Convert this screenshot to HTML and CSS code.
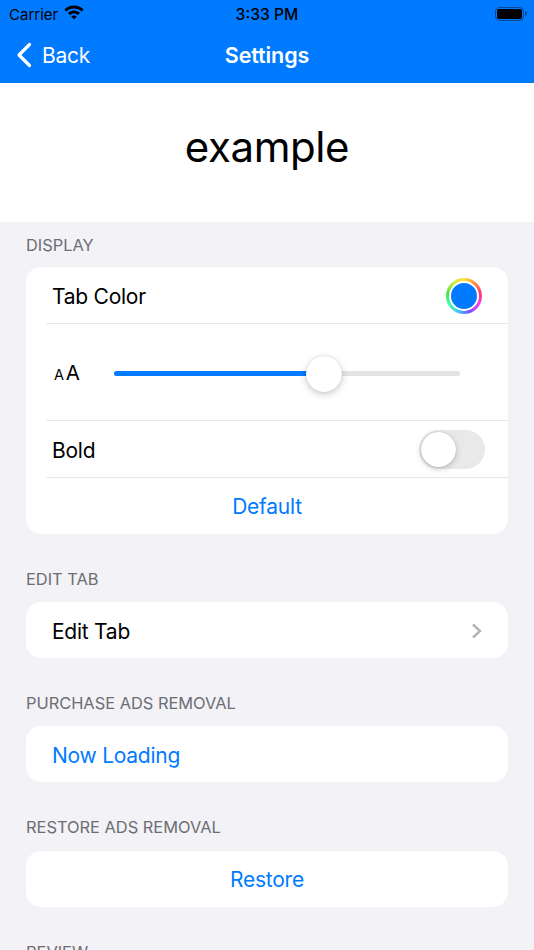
FILE: index.html
```html
<!DOCTYPE html>
<html lang="en">
<head>
  <meta charset="UTF-8" />
  <title>Settings</title>
  <link rel="stylesheet" href="styles.css">
</head>
<body>

  <div class="topbar">
    <div class="status">
      <div class="status-left">
        <span>Carrier</span>
        <svg class="wifi" viewBox="0 0 20 15" width="20" height="15">
          <path d="M10 .6C6.300.6 2.900 2 .4 4.400l2 2.100C4.400 4.600 7.100 3.500 10 3.500s5.600 1.100 7.600 3l2-2.100C17.100 2 13.700.6 10 .6z"/>
          <path d="M10 5.600c-2.300 0-4.400.9-6 2.400l2 2.100C7.100 9.100 8.500 8.500 10 8.500s2.900.6 4 1.600l2-2.100c-1.600-1.500-3.700-2.400-6-2.400z"/>
          <path d="M10 10.500c-1.100 0-2 .4-2.700 1.100L10 14.400l2.700-2.800c-.7-.7-1.600-1.100-2.700-1.100z"/>
        </svg>
      </div>
      <span class="clock">3:33 PM</span>
      <div class="battery"><div class="battery-fill"></div></div>
    </div>
    <div class="nav">
      <div class="back">
        <svg viewBox="0 0 16 26" width="16" height="26">
          <path d="M13.500 2.500L3 13l10.500 10.500" fill="none" stroke="#fff" stroke-width="3.200" stroke-linecap="round" stroke-linejoin="round"/>
        </svg>
        <span class="back-text">Back</span>
      </div>
      <div class="nav-title">Settings</div>
    </div>
  </div>

  <div class="preview">example</div>

  <div class="content">
    <div class="group-label first">DISPLAY</div>
    <div class="card">
      <div class="row">
        <span>Tab Color</span>
        <div class="color-well"><div class="color-dot"></div></div>
      </div>
      <div class="row slider-row">
        <div class="size-icon"><span class="small-a">A</span><span class="big-a">A</span></div>
        <div class="slider">
          <div class="slider-fill"></div>
          <div class="slider-knob"></div>
        </div>
      </div>
      <div class="row">
        <span>Bold</span>
        <div class="toggle"><div class="toggle-knob"></div></div>
      </div>
      <div class="row link center">Default</div>
    </div>

    <div class="group-label">EDIT TAB</div>
    <div class="card">
      <div class="row">
        <span>Edit Tab</span>
        <svg class="chevron" viewBox="0 0 12 16" width="12" height="16">
          <path d="M2 1.500l7 6.500-7 6.500" fill="none" stroke="#b4b4b8" stroke-width="2.400"/>
        </svg>
      </div>
    </div>

    <div class="group-label">PURCHASE ADS REMOVAL</div>
    <div class="card">
      <div class="row link">Now Loading</div>
    </div>

    <div class="group-label">RESTORE ADS REMOVAL</div>
    <div class="card">
      <div class="row link center">Restore</div>
    </div>

    <div class="group-label">REVIEW</div>
  </div>

</body>
</html>
```

FILE: styles.css
```css
html, body { margin: 0; height: 950px; overflow: hidden; }
body { font-family: Inter, "Liberation Sans", sans-serif; background: #f2f2f7; color: #000; }

.topbar { background: #007aff; height: 83px; }
.status { height: 28px; position: relative; display: flex; align-items: center; justify-content: space-between; padding: 0 8px 0 9px; font-size: 15px; }
.status-left { display: flex; align-items: center; gap: 6px; }
.wifi { display: block; margin-top: -3px; }
.clock { position: absolute; left: 0; right: 0; text-align: center; font-weight: 500; font-size: 15.700px; }
.battery { width: 29px; height: 14px; border: 1.500px solid rgba(0, 0, 0, 0.4); border-radius: 4.500px; padding: 1px; box-sizing: border-box; margin-right: 2px; position: relative; }
.battery::after { content: ""; position: absolute; right: -4px; top: 2.500px; width: 2px; height: 5px; background: rgba(0, 0, 0, 0.4); border-radius: 0 2px 2px 0; }
.battery-fill { height: 100%; background: #000; border-radius: 2px; }

.nav { height: 55px; position: relative; display: flex; align-items: center; justify-content: center; color: #fff; padding-bottom: 2px; box-sizing: border-box; }
.back { position: absolute; left: 16px; display: flex; align-items: center; gap: 10px; font-size: 21px; letter-spacing: -0.25px; }
.back svg { display: block; }
.back-text { margin-top: 2px; }
.nav-title { font-weight: 600; font-size: 21.500px; letter-spacing: -0.1px; }

.preview { background: #fff; height: 139px; display: flex; align-items: center; justify-content: center; font-size: 42px; letter-spacing: -0.4px; padding-bottom: 12px; box-sizing: border-box; }

.content { padding: 0 26px; }
.group-label { font-size: 16.400px; color: #6d6d72; height: 19px; line-height: 19px; margin: 36px 0 13.200px 0; }
.group-label.first { margin-top: 14px; margin-bottom: 12px; }

.card { background: #fff; border-radius: 15px; padding-left: 20px; }
.row { height: 54px; padding-top: 2px; display: flex; align-items: center; justify-content: space-between; padding-right: 24px; padding-left: 6px; font-size: 21px; letter-spacing: -0.25px; border-top: 1px solid #e5e5ea; }
.row:first-child { border-top: none; }
.link { color: #007aff; }
.center { justify-content: center; padding-left: 0; margin-left: -20px; padding-right: 0; border-top: none; position: relative; }
.row.center:not(:first-child) { height: 55px; }
.center::before { content: ""; position: absolute; top: 0; left: 20px; right: 0; height: 1px; background: #e5e5ea; }
.card > .center:first-child::before { display: none; }

.color-well { width: 36px; height: 36px; border-radius: 50%; box-sizing: border-box; padding: 3px; background: conic-gradient(#ffe23d, #ff8a3d, #ff3d6e, #f03dff, #7a4dff, #3dc8ff, #3dffb0, #4de03d, #c8ef3d, #ffe23d); display: flex; margin-right: 2px; margin-top: -1px; }
.color-dot { flex: 1; border-radius: 50%; background: #007aff; border: 2.500px solid #fff; }

.row.slider-row { height: 94px; padding-right: 48px; }
.size-icon { display: flex; align-items: baseline; gap: 2px; width: 60px; margin-left: 2px; flex: none; margin-top: -1px; }
.small-a { font-size: 14.500px; }
.big-a { font-size: 20.500px; }
.slider { flex: 1; height: 5px; background: #e3e3e6; border-radius: 3px; position: relative; margin-top: 1px; }
.slider-fill { width: 60.700%; height: 100%; background: #007aff; border-radius: 3px; }
.slider-knob { position: absolute; left: 60.700%; top: 50%; width: 36px; height: 36px; margin: -18px 0 0 -18px; background: #fff; border-radius: 50%; box-shadow: 0 2px 7px rgba(0, 0, 0, 0.22), 0 0 1px rgba(0, 0, 0, 0.2); }

.toggle { width: 66px; height: 39px; background: #e9e9ea; border-radius: 20px; padding: 2px; box-sizing: border-box; margin-right: -1px; margin-top: -2px; }
.toggle-knob { width: 35px; height: 35px; background: #fff; border-radius: 50%; box-shadow: 0 2px 6px rgba(0, 0, 0, 0.2), 0 0 1px rgba(0, 0, 0, 0.25); }

.chevron { display: block; margin-right: 1px; }
```
